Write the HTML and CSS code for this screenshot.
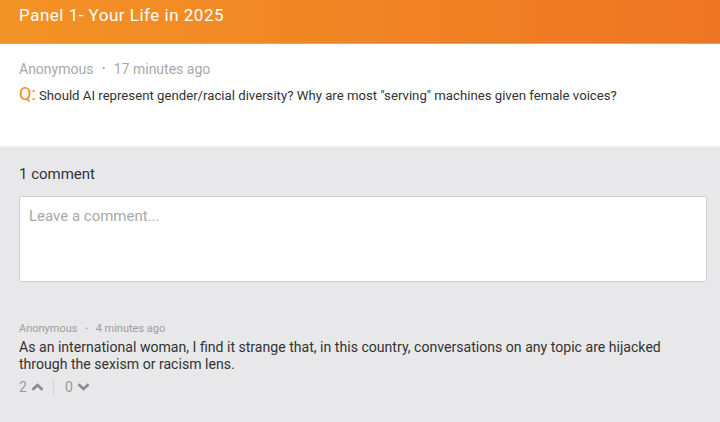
FILE: index.html
```html
<!DOCTYPE html>
<html lang="en">
<head>
    <meta charset="UTF-8">
    <meta name="viewport" content="width=device-width, initial-scale=1.0">
    <title>Panel 1- Your Life in 2025</title>
    <link rel="stylesheet" href="styles.css">
</head>
<body>
    <div class="header">
        <h1>Panel 1- Your Life in 2025</h1>
    </div>

    <div class="question">
        <div class="meta">Anonymous <span class="dot">&bull;</span> 17 minutes ago</div>
        <p class="qtext"><span class="q">Q:</span> Should AI represent gender/racial diversity? Why are most "serving" machines given female voices?</p>
    </div>

    <div class="comments">
        <h2>1 comment</h2>
        <div class="box">Leave a comment...</div>

        <div class="comment">
            <div class="cmeta">Anonymous <span class="dot">&bull;</span> 4 minutes ago</div>
            <p class="ctext">As an international woman, I find it strange that, in this country, conversations on any topic are hijacked through the sexism or racism lens.</p>
            <div class="votes">
                <span class="vote">2
                    <svg width="13" height="8" viewBox="0 0 13 8"><path d="M1.5 6.8 L6.5 2 L11.5 6.8" fill="none" stroke="#8a8a8a" stroke-width="2.6"/></svg>
                </span>
                <span class="sep"></span>
                <span class="vote">0
                    <svg width="13" height="8" viewBox="0 0 13 8"><path d="M1.5 1.2 L6.5 6 L11.5 1.2" fill="none" stroke="#8a8a8a" stroke-width="2.6"/></svg>
                </span>
            </div>
        </div>
    </div>
</body>
</html>
```

FILE: styles.css
```css
body {
    margin: 0;
    font-family: Roboto, "Noto Sans", sans-serif;
    background-color: #e8e8ea;
    color: #333;
}

.header {
    height: 43px;
    background: linear-gradient(to right, #f39325, #ee7523);
    border-bottom: 1px solid #f5a04a;
    padding: 0 19px;
}
.header h1 {
    margin: 0;
    padding-top: 5px;
    font-size: 17px;
    font-weight: 400;
    color: #fff;
    letter-spacing: 0.5px;
}

.question {
    background-color: #fff;
    padding: 17px 19px 0;
    height: 85px;
    border-bottom: 1px solid #f2f2f3;
}
.meta {
    font-size: 14px;
    color: #a8a8a8;
}
.dot {
    font-size: 10px;
    margin: 0 5px;
    vertical-align: 2px;
}
.qtext {
    margin: 6px 0 0;
    font-size: 13.2px;
    color: #333;
}
.q {
    color: #f28a25;
    font-size: 18px;
}

.comments {
    padding: 18px 13px 0 19px;
}
.comments h2 {
    margin: 0;
    font-size: 15px;
    font-weight: 400;
    color: #333;
}
.box {
    margin-top: 13px;
    height: 74px;
    background-color: #fff;
    border: 1px solid #cfcfd1;
    border-radius: 2px;
    padding: 10px 9px 0;
    font-size: 15px;
    color: #a9a9ab;
}

.comment {
    margin-top: 40px;
}
.cmeta {
    font-size: 11px;
    color: #9c9c9e;
}
.cmeta .dot {
    font-size: 8px;
    vertical-align: 1px;
}
.ctext {
    margin: 4px 0 0;
    font-size: 14.1px;
    line-height: 17px;
    color: #333;
}
.votes {
    display: flex;
    align-items: center;
    margin-top: 6px;
    font-size: 14px;
    color: #9a9a9a;
}
.vote {
    display: flex;
    align-items: center;
    gap: 4px;
}
.sep {
    width: 1px;
    height: 16px;
    background-color: #d2d2d4;
    margin: 0 11px 0 9px;
}
```
